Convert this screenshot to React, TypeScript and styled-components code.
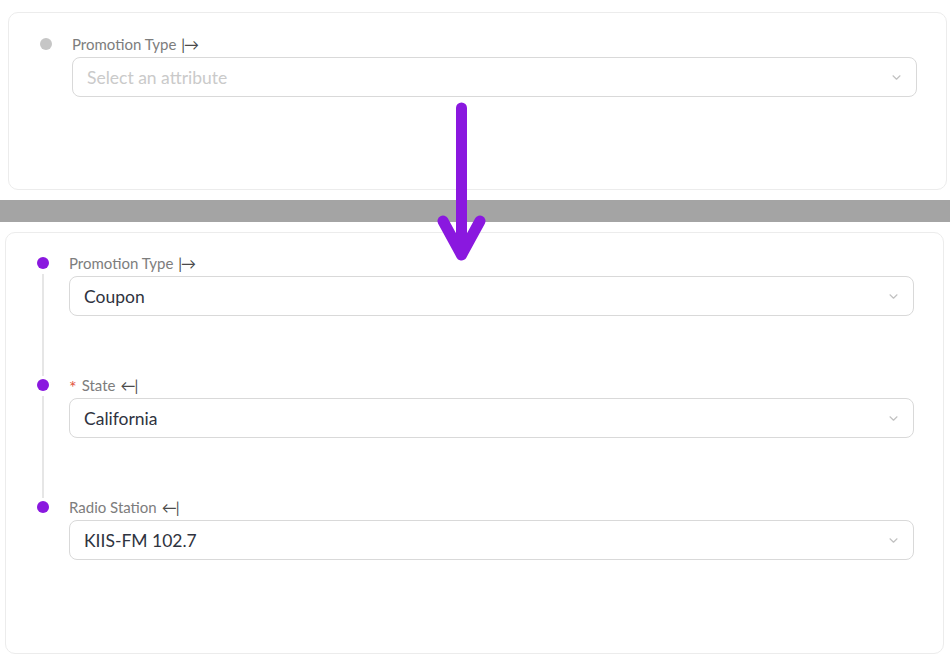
import styled, { createGlobalStyle } from 'styled-components'

const GlobalStyle = createGlobalStyle`
  body {
    margin: 0;
    background: #ffffff;
    font-family: Lato, 'Noto Sans', Arial, sans-serif;
  }
`

const Page = styled.div`
  position: relative;
  width: 950px;
  height: 661px;
  overflow: hidden;
  display: flex;
  flex-direction: column;
`

const Card = styled.div<{ $margin: string; $top: number }>`
  margin: ${({ $margin }) => $margin};
  padding: ${({ $top }) => `${$top}px 29px ${113 - $top}px 31px`};
  border: 1px solid #ececec;
  border-radius: 10px;
  background: #ffffff;
  display: flex;
  flex-direction: column;
`

const Divider = styled.div`
  margin-top: 10px;
  height: 22px;
  background: #a4a4a4;
`

const Step = styled.div`
  display: grid;
  grid-template-columns: 12px 1fr;
  column-gap: 20px;
`

const Timeline = styled.div`
  display: flex;
  flex-direction: column;
  align-items: center;
  padding-top: 4px;
  gap: 5px;
`

const Dot = styled.div<{ $active: boolean }>`
  width: 12px;
  height: 12px;
  border-radius: 50%;
  background: ${({ $active }) => ($active ? '#8a18df' : '#c6c6c6')};
  flex-shrink: 0;
`

const Line = styled.div`
  flex: 1;
  width: 2px;
  margin-bottom: -1px;
  background: #e6e6e6;
`

const Field = styled.div<{ $last?: boolean }>`
  display: flex;
  flex-direction: column;
  gap: 3px;
  padding-bottom: ${({ $last }) => ($last ? '0' : '59px')};
`

const Label = styled.div`
  height: 20px;
  display: flex;
  align-items: center;
  gap: 5px;
  font-size: 15px;
  color: #7d7d7d;
`

const Required = styled.span`
  color: #e2553f;
  font-size: 18px;
  line-height: 1;
  margin-top: 4px;
`

const FlowMark = styled.span`
  color: #4a4a4a;
  font-size: 15px;
  letter-spacing: -1px;
`

const Select = styled.div`
  height: 40px;
  box-sizing: border-box;
  border: 1px solid #d9d9d9;
  border-radius: 8px;
  padding: 0 15px 0 14px;
  display: flex;
  align-items: center;
  justify-content: space-between;
`

const Value = styled.span<{ $placeholder?: boolean }>`
  font-size: 17.5px;
  color: ${({ $placeholder }) => ($placeholder ? '#cacaca' : '#2f3340')};
`

const Overlay = styled.svg`
  position: absolute;
  left: 0;
  top: 0;
  pointer-events: none;
`

function Chevron() {
  return (
    <svg width="9" height="5" viewBox="0 0 9 5" fill="none">
      <path d="M1 0.8l3.5 3.4 3.5-3.4" stroke="#c2c2c2" strokeWidth="1.2" strokeLinecap="round" strokeLinejoin="round" />
    </svg>
  )
}

interface StepData {
  label: string
  value?: string
  required?: boolean
  dir: 'in' | 'out'
}

function FormStep({ step, active, last }: { step: StepData; active: boolean; last?: boolean }) {
  return (
    <Step>
      <Timeline>
        <Dot $active={active} />
        {!last && <Line />}
      </Timeline>
      <Field $last={last}>
        <Label>
          {step.required && <Required>*</Required>}
          <span>{step.label}</span>
          <FlowMark>{step.dir === 'out' ? '|→' : '←|'}</FlowMark>
        </Label>
        <Select>
          <Value $placeholder={!step.value}>{step.value ?? 'Select an attribute'}</Value>
          <Chevron />
        </Select>
      </Field>
    </Step>
  )
}

const filled: StepData[] = [
  { label: 'Promotion Type', value: 'Coupon', dir: 'out' },
  { label: 'State', value: 'California', required: true, dir: 'in' },
  { label: 'Radio Station', value: 'KIIS-FM 102.7', dir: 'in' },
]

export default function App() {
  return (
    <Page>
      <GlobalStyle />
      <Card $margin="12px 3px 0 8px" $top={21}>
        <FormStep step={{ label: 'Promotion Type', dir: 'out' }} active={false} last />
      </Card>
      <Divider />
      <Card $margin="10px 6px 0 5px" $top={20}>
        {filled.map((s, i) => (
          <FormStep key={s.label} step={s} active last={i === filled.length - 1} />
        ))}
      </Card>
      <Overlay width="950" height="661" viewBox="0 0 950 661">
        <path
          d="M461.5 108V252M443 221L461.5 255L480 221"
          stroke="#8a18df"
          strokeWidth="11"
          strokeLinecap="round"
          strokeLinejoin="round"
          fill="none"
        />
      </Overlay>
    </Page>
  )
}
